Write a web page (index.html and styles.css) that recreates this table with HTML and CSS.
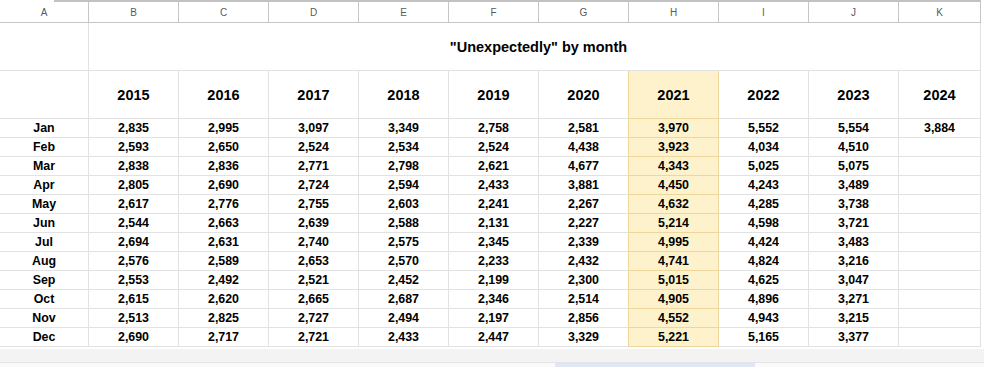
FILE: index.html
```html
<!DOCTYPE html>
<html lang="en">
<head>
  <meta charset="UTF-8" />
  <meta name="viewport" content="width=device-width, initial-scale=1.0"/>
  <title>"Unexpectedly" by month</title>
  <link rel="stylesheet" href="styles.css">
</head>
<body>
  <div class="topbar"></div>
  <table class="sheet">
    <colgroup>
      <col class="col-a">
      <col class="col-y"><col class="col-y"><col class="col-y"><col class="col-y"><col class="col-y">
      <col class="col-y"><col class="col-y"><col class="col-y"><col class="col-y">
      <col class="col-k">
    </colgroup>
    <thead>
      <tr class="letters">
        <th>A</th><th>B</th><th>C</th><th>D</th><th>E</th><th>F</th><th>G</th><th>H</th><th>I</th><th>J</th><th>K</th>
      </tr>
    </thead>
    <tbody>
      <tr class="title-row">
        <td></td>
        <td colspan="10" class="title">"Unexpectedly" by month</td>
      </tr>
      <tr class="years">
        <td></td>
        <td>2015</td><td>2016</td><td>2017</td><td>2018</td><td>2019</td><td>2020</td>
        <td class="hl">2021</td><td>2022</td><td>2023</td><td>2024</td>
      </tr>
      <tr><td>Jan</td><td>2,835</td><td>2,995</td><td>3,097</td><td>3,349</td><td>2,758</td><td>2,581</td><td class="hl">3,970</td><td>5,552</td><td>5,554</td><td>3,884</td></tr>
      <tr><td>Feb</td><td>2,593</td><td>2,650</td><td>2,524</td><td>2,534</td><td>2,524</td><td>4,438</td><td class="hl">3,923</td><td>4,034</td><td>4,510</td><td></td></tr>
      <tr><td>Mar</td><td>2,838</td><td>2,836</td><td>2,771</td><td>2,798</td><td>2,621</td><td>4,677</td><td class="hl">4,343</td><td>5,025</td><td>5,075</td><td></td></tr>
      <tr><td>Apr</td><td>2,805</td><td>2,690</td><td>2,724</td><td>2,594</td><td>2,433</td><td>3,881</td><td class="hl">4,450</td><td>4,243</td><td>3,489</td><td></td></tr>
      <tr><td>May</td><td>2,617</td><td>2,776</td><td>2,755</td><td>2,603</td><td>2,241</td><td>2,267</td><td class="hl">4,632</td><td>4,285</td><td>3,738</td><td></td></tr>
      <tr><td>Jun</td><td>2,544</td><td>2,663</td><td>2,639</td><td>2,588</td><td>2,131</td><td>2,227</td><td class="hl">5,214</td><td>4,598</td><td>3,721</td><td></td></tr>
      <tr><td>Jul</td><td>2,694</td><td>2,631</td><td>2,740</td><td>2,575</td><td>2,345</td><td>2,339</td><td class="hl">4,995</td><td>4,424</td><td>3,483</td><td></td></tr>
      <tr><td>Aug</td><td>2,576</td><td>2,589</td><td>2,653</td><td>2,570</td><td>2,233</td><td>2,432</td><td class="hl">4,741</td><td>4,824</td><td>3,216</td><td></td></tr>
      <tr><td>Sep</td><td>2,553</td><td>2,492</td><td>2,521</td><td>2,452</td><td>2,199</td><td>2,300</td><td class="hl">5,015</td><td>4,625</td><td>3,047</td><td></td></tr>
      <tr><td>Oct</td><td>2,615</td><td>2,620</td><td>2,665</td><td>2,687</td><td>2,346</td><td>2,514</td><td class="hl">4,905</td><td>4,896</td><td>3,271</td><td></td></tr>
      <tr><td>Nov</td><td>2,513</td><td>2,825</td><td>2,727</td><td>2,494</td><td>2,197</td><td>2,856</td><td class="hl">4,552</td><td>4,943</td><td>3,215</td><td></td></tr>
      <tr><td>Dec</td><td>2,690</td><td>2,717</td><td>2,721</td><td>2,433</td><td>2,447</td><td>3,329</td><td class="hl">5,221</td><td>5,165</td><td>3,377</td><td></td></tr>
    </tbody>
  </table>
  <div class="hscroll"></div>
  <div class="tabs">
    <div class="tab-active"></div>
  </div>
</body>
</html>
```

FILE: styles.css
```css
:root {
  --grid: #e2e2e2;
  --head-line: #c6c6c6;
  --hl-bg: #fdf2cb;
  --hl-line: #efd79c;
  --text: #000000;
  --text-light: #5a5a5a;
}
* {
  margin: 0;
  padding: 0;
  box-sizing: border-box;
}
body {
  font-family: 'Liberation Sans', Arial, sans-serif;
  background: #ffffff;
  color: var(--text);
  overflow: hidden;
}
.topbar {
  height: 2px;
  margin-left: 54px;
  width: 927px;
  background: #c2c2c2;
}
.sheet {
  border-collapse: separate;
  border-spacing: 0;
  table-layout: fixed;
  width: 981px;
}
.col-a {
  width: 89px;
}
.col-y {
  width: 90px;
}
.col-k {
  width: 82px;
}
.sheet th,
.sheet td {
  border-right: 1px solid var(--grid);
  border-bottom: 1px solid var(--grid);
  text-align: center;
  vertical-align: middle;
  font-weight: 700;
  white-space: nowrap;
  overflow: hidden;
}
.letters th {
  height: 21px;
  font-size: 10px;
  font-weight: 400;
  color: var(--text-light);
  border-right-color: var(--head-line);
  border-bottom-color: var(--head-line);
}
.title-row td {
  height: 48px;
}
.title {
  font-size: 14.5px;
  padding-left: 8px;
}
.years td {
  height: 48px;
  font-size: 14.5px;
}
tbody tr:not(.title-row):not(.years) td {
  height: 19px;
  font-size: 12.4px;
  line-height: 18px;
}
.sheet td.hl {
  background: var(--hl-bg);
  border-right-color: var(--hl-line);
  border-bottom-color: var(--hl-line);
}
.sheet td:has(+ .hl) {
  border-right-color: var(--hl-line);
}
.hscroll {
  margin-top: 2px;
  height: 14px;
  background: #f3f3f3;
  border-bottom: 1px solid #e4e4e4;
}
.tabs {
  height: 4px;
  background: #fafafa;
}
.tab-active {
  margin-left: 555px;
  width: 200px;
  height: 100%;
  background: #dfe7f5;
}
```
